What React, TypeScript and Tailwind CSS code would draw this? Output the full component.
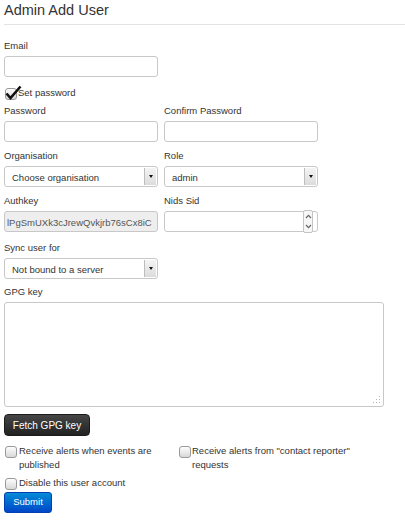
import { useState } from 'react'

function Checkbox({ checked = false, className = '' }: { checked?: boolean; className?: string }) {
  return (
    <span
      className={
        'relative mt-[2px] block h-[12px] w-[12px] shrink-0 rounded-[3px] border border-[#9a9a9a] bg-gradient-to-b from-[#fdfdfd] to-[#d8d8d8] ' +
        className
      }
    >
      {checked && (
        <svg
          className="absolute -left-[1px] -top-[4px]"
          width="17"
          height="15"
          viewBox="0 0 17 15"
        >
          <path d="M1.5 8.5 L5.5 13 L15.5 1.5" fill="none" stroke="#111" strokeWidth="2.6" strokeLinejoin="miter" />
        </svg>
      )}
    </span>
  )
}

function Select({ value }: { value: string }) {
  return (
    <div className="flex h-[21px] w-[154px] items-stretch rounded-[3px] border border-[#c8c8c8] bg-white">
      <div className="flex-1 truncate pl-[7px] pt-[4px] leading-[14px] text-[#333]">{value}</div>
      <div className="my-[1px] mr-[1px] flex w-[12px] items-center justify-center border-l border-[#bdbdbd] bg-gradient-to-b from-[#f4f4f4] to-[#dcdcdc]">
        <span className="h-0 w-0 border-x-[2.5px] border-t-[3px] border-x-transparent border-t-[#111]" />
      </div>
    </div>
  )
}

function Field({ label, children }: { label: string; children: React.ReactNode }) {
  return (
    <div className="flex flex-col">
      <label className="mb-[3px] block h-[14px] leading-[14px] text-[#333]">{label}</label>
      {children}
    </div>
  )
}

function TextInput({ value = '' }: { value?: string }) {
  return <div className="h-[21px] w-[154px] rounded-[3px] border border-[#c8c8c8] bg-white">{value}</div>
}

function App() {
  const [setPassword] = useState(true)

  return (
    <div className="min-h-[530px] bg-white pl-[4px] font-['Liberation_Sans',Arial,sans-serif] text-[9.5px] text-[#333]">
      <div className="h-[25px] border-b border-[#e3e3e3]">
        <h2 className="text-[14.5px] leading-[20px] text-[#333]">Admin Add User</h2>
      </div>

      <div className="mt-[14px]">
        <Field label="Email">
          <TextInput />
        </Field>
      </div>

      <div className="mt-[9px] flex h-[14px] items-start leading-[14px]">
        <Checkbox checked={setPassword} className="ml-[1px]" />
        <span className="ml-[1px]">Set password</span>
      </div>

      <div className="mt-[4px] grid grid-cols-[154px_154px] gap-x-[6px]">
        <Field label="Password">
          <TextInput />
        </Field>
        <Field label="Confirm Password">
          <TextInput />
        </Field>
      </div>

      <div className="mt-[7px] grid grid-cols-[154px_154px] gap-x-[6px]">
        <Field label="Organisation">
          <Select value="Choose organisation" />
        </Field>
        <Field label="Role">
          <Select value="admin" />
        </Field>
      </div>

      <div className="mt-[7px] grid grid-cols-[154px_154px] gap-x-[6px]">
        <Field label="Authkey">
          <div className="h-[21px] w-[154px] overflow-hidden whitespace-nowrap rounded-[3px] border border-[#c8c8c8] bg-[#eeeeee] pl-[2px] pt-[4px] leading-[14px] text-[#555]">
            lPgSmUXk3cJrewQvkjrb76sCx8iC
          </div>
        </Field>
        <Field label="Nids Sid">
          <div className="flex h-[21px] w-[154px] items-stretch rounded-[3px] border border-[#c8c8c8] bg-white">
            <div className="flex-1" />
            <div className="-my-[2px] mr-[4px] flex w-[10px] flex-col items-center justify-around rounded-[2px] border border-[#c4c4c4] bg-[#f7f7f7]">
              <svg width="7" height="5" viewBox="0 0 7 5">
                <path d="M1 4 L3.5 1.3 L6 4" fill="none" stroke="#666" strokeWidth="1.2" />
              </svg>
              <svg width="7" height="5" viewBox="0 0 7 5">
                <path d="M1 1 L3.5 3.7 L6 1" fill="none" stroke="#666" strokeWidth="1.2" />
              </svg>
            </div>
          </div>
        </Field>
      </div>

      <div className="mt-[9px]">
        <Field label="Sync user for">
          <Select value="Not bound to a server" />
        </Field>
      </div>

      <div className="mt-[6px]">
        <Field label="GPG key">
          <div className="flex h-[105px] w-[380px] items-end justify-end rounded-[3px] border border-[#c8c8c8] bg-white p-[2px]">
            <svg width="8" height="8" viewBox="0 0 8 8">
              <g fill="#b5b5b5">
                <rect x="6" y="0" width="1" height="1" />
                <rect x="6" y="3" width="1" height="1" />
                <rect x="3" y="3" width="1" height="1" />
                <rect x="6" y="6" width="1" height="1" />
                <rect x="3" y="6" width="1" height="1" />
                <rect x="0" y="6" width="1" height="1" />
              </g>
            </svg>
          </div>
        </Field>
      </div>

      <button className="mt-[7px] block h-[22px] w-[86px] rounded-[4px] border border-[#1a1a1a] bg-gradient-to-b from-[#464646] to-[#222222] text-[10px] text-white">
        Fetch GPG key
      </button>

      <div className="mt-[8px] grid grid-cols-[175px_175px] leading-[14px]">
        <div className="flex items-start">
          <Checkbox className="ml-[1px]" />
          <span className="ml-[2px]">Receive alerts when events are published</span>
        </div>
        <div className="flex items-start">
          <Checkbox />
          <span className="ml-[1px]">Receive alerts from "contact reporter" requests</span>
        </div>
      </div>

      <div className="mt-[4px] flex items-start leading-[14px]">
        <Checkbox className="ml-[1px]" />
        <span className="ml-[2px]">Disable this user account</span>
      </div>

      <button className="mt-[2px] block h-[21px] w-[48px] rounded-[3px] border border-[#0040b0] bg-gradient-to-b from-[#0a8ad6] to-[#0046c8] text-[9.5px] text-white">
        Submit
      </button>
    </div>
  )
}

export default App
